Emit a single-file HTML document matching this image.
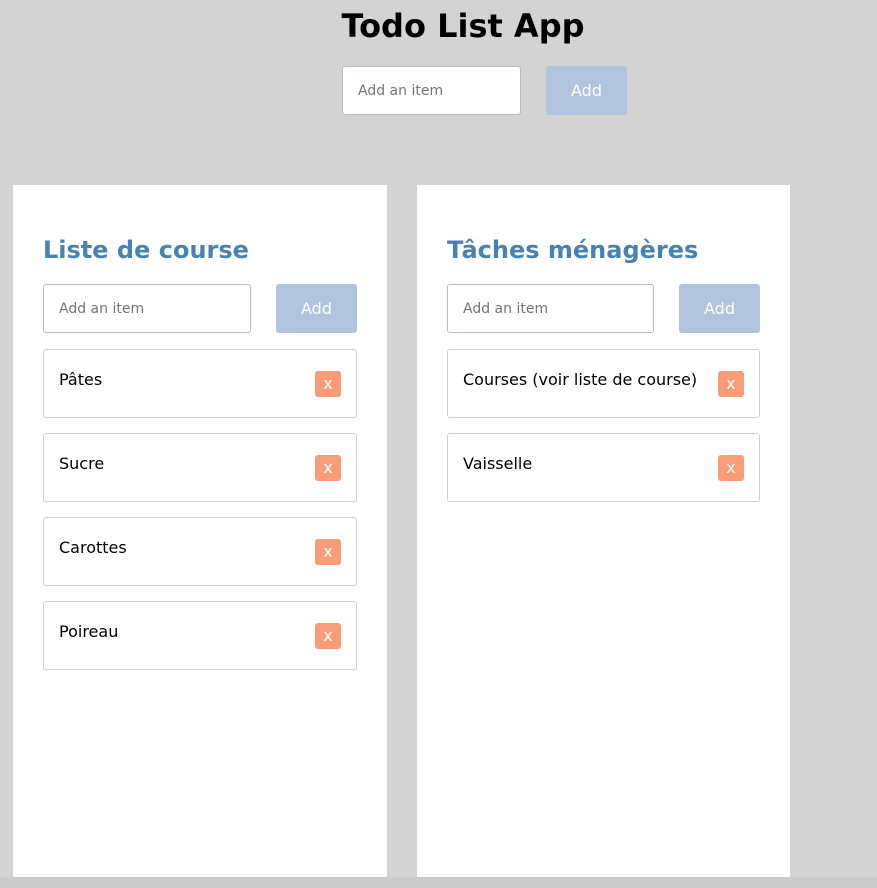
<!DOCTYPE html>
<html><head><style>
body{margin:0;background:#d3d3d3;font-family:"DejaVu Sans","Liberation Sans",sans-serif;width:877px;height:888px;position:relative;overflow:hidden}
.a{position:absolute;box-sizing:border-box}
h1{position:absolute;margin:0;left:0;width:926px;text-align:center;top:7px;font-size:32px;font-weight:bold;color:#000}
.in{background:#fff;border:1px solid #b0bcc8;border-radius:3px;font-size:14px;color:#757575;padding-left:15px;display:flex;align-items:center}
.btn{background:#b0c4de;border-radius:3px;color:#fff;font-size:16px;display:flex;align-items:center;justify-content:center}
.panel{background:#fff;top:185px;height:692px}
h2{position:absolute;margin:0;font-size:24px;font-weight:bold;color:#4682b4;top:236px}
.it{background:#fff;border:1px solid #d0d0d0;border-radius:3px;height:69px;font-size:16px;color:#000;padding:20px 0 0 15px}
.x{position:absolute;width:26px;height:26px;background:#fa9c78;border-radius:3px;color:#fff;font-size:16px;text-align:center;line-height:25px;top:21px;right:15px}
.bar{left:0;top:877px;width:877px;height:11px;background:#cbcbcb}
</style></head><body>
<h1>Todo List App</h1>
<div class="a in" style="left:342px;top:66px;width:179px;height:49px">Add an item</div>
<div class="a btn" style="left:546px;top:66px;width:81px;height:49px">Add</div>

<div class="a panel" style="left:13px;width:374px"></div>
<div class="a panel" style="left:417px;width:373px"></div>

<h2 style="left:43px">Liste de course</h2>
<div class="a in" style="left:43px;top:284px;width:208px;height:49px">Add an item</div>
<div class="a btn" style="left:276px;top:284px;width:81px;height:49px">Add</div>
<div class="a it" style="left:43px;top:349px;width:314px">Pâtes<div class="x">x</div></div>
<div class="a it" style="left:43px;top:433px;width:314px">Sucre<div class="x">x</div></div>
<div class="a it" style="left:43px;top:517px;width:314px">Carottes<div class="x">x</div></div>
<div class="a it" style="left:43px;top:601px;width:314px">Poireau<div class="x">x</div></div>

<h2 style="left:447px">Tâches ménagères</h2>
<div class="a in" style="left:447px;top:284px;width:207px;height:49px">Add an item</div>
<div class="a btn" style="left:679px;top:284px;width:81px;height:49px">Add</div>
<div class="a it" style="left:447px;top:349px;width:313px">Courses (voir liste de course)<div class="x">x</div></div>
<div class="a it" style="left:447px;top:433px;width:313px">Vaisselle<div class="x">x</div></div>

<div class="a bar"></div>
</body></html>
